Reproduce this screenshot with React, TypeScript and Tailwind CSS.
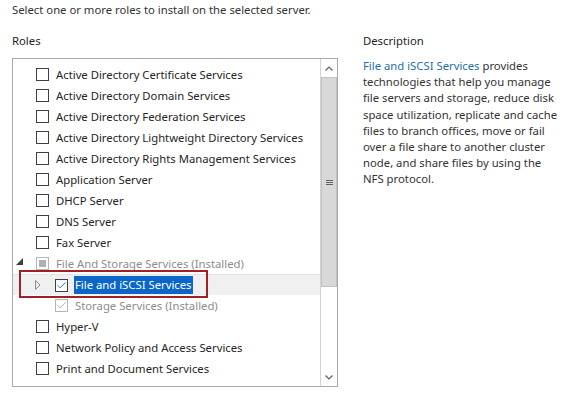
import { Check } from "lucide-react";

type Role = {
  label: string;
  level?: number;
  state?: "off" | "on" | "mixed";
  disabled?: boolean;
  arrow?: "open" | "closed";
  selected?: boolean;
};

const roles: Role[] = [
  { label: "Active Directory Certificate Services" },
  { label: "Active Directory Domain Services" },
  { label: "Active Directory Federation Services" },
  { label: "Active Directory Lightweight Directory Services" },
  { label: "Active Directory Rights Management Services" },
  { label: "Application Server" },
  { label: "DHCP Server" },
  { label: "DNS Server" },
  { label: "Fax Server" },
  { label: "File And Storage Services (Installed)", state: "mixed", disabled: true, arrow: "open" },
  { label: "File and iSCSI Services", level: 1, state: "on", arrow: "closed", selected: true },
  { label: "Storage Services (Installed)", level: 1, state: "on", disabled: true },
  { label: "Hyper-V" },
  { label: "Network Policy and Access Services" },
  { label: "Print and Document Services" },
];

const CheckBox = ({ state = "off", disabled }: { state?: Role["state"]; disabled?: boolean }) => (
  <div
    className={`flex h-[13px] w-[13px] shrink-0 items-center justify-center border bg-white ${
      disabled ? "border-[#b5b5b5]" : "border-[#404040]"
    }`}
  >
    {state === "mixed" && <div className="h-[7px] w-[7px] bg-[#b0b0b0]" />}
    {state === "on" && (
      <Check size={11} strokeWidth={2} className={disabled ? "text-[#a8a8a8]" : "text-[#2b5fa6]"} />
    )}
  </div>
);

const RoleRow = ({ role }: { role: Role }) => {
  const indent = role.level === 1;
  return (
    <div
      className={`relative flex h-[21px] items-center ${
        role.selected ? "border-t border-[#e2e2e2] bg-[#f0f0f0]" : ""
      }`}
    >
      {indent && <div className="w-[19px] shrink-0" />}
      <div className="relative h-full w-[23px] shrink-0">
        {role.arrow === "open" && (
          <svg className="absolute left-[3px] top-[5px]" width="7" height="7" viewBox="0 0 7 7">
            <path d="M7 0 L7 7 L0 7 Z" fill="#404040" />
          </svg>
        )}
        {role.arrow === "closed" && (
          <svg className="absolute left-[3px] top-[5px]" width="6" height="10" viewBox="0 0 6 10">
            <path d="M0.5 0.5 L5 5 L0.5 9.5 Z" fill="none" stroke="#8c8c8c" strokeWidth="1" />
          </svg>
        )}
      </div>
      <CheckBox state={role.state} disabled={role.disabled} />
      <span
        className={`ml-[6px] whitespace-nowrap px-[1px] leading-[18px] ${
          role.selected
            ? "bg-[#0a66c8] text-white"
            : role.disabled
              ? "text-[#8d8d8d]"
              : "text-[#262626]"
        }`}
      >
        {role.label}
      </span>
      {role.selected && (
        <div className="pointer-events-none absolute left-[6px] top-[-5px] h-[28px] w-[189px] border-2 border-[#a31f26]" />
      )}
    </div>
  );
};

export default function App() {
  return (
    <div
      className="h-[397px] w-[568px] overflow-hidden bg-white pl-[12px] text-[11.3px] text-[#333]"
      style={{ fontFamily: '"Noto Sans", "Open Sans", sans-serif' }}
    >
      <p className="pt-[2px] leading-[16px]">Select one or more roles to install on the selected server.</p>

      <div className="mt-[15px] flex">
        <div className="w-[326px] shrink-0">
          <h3 className="leading-[16px] text-[#1e1e1e]">Roles</h3>
          <div className="mt-[9px] flex h-[329px] border border-[#a9a9a9]">
            <div className="flex-1 pt-[5px]">
              {roles.map((r) => (
                <RoleRow key={r.label} role={r} />
              ))}
            </div>
            <div className="flex w-[17px] flex-col border-l border-[#d4d4d4] bg-white">
              <div className="flex h-[18px] items-center justify-center">
                <svg width="8" height="5" viewBox="0 0 8 5">
                  <path d="M0.5 4.5 L4 1 L7.5 4.5" fill="none" stroke="#606060" strokeWidth="1.2" />
                </svg>
              </div>
              <div className="flex h-[210px] items-center justify-center border border-[#c2c2c2] bg-[#d8d8d8]">
                <div className="flex w-[7px] flex-col gap-[1px]">
                  <div className="h-[1px] bg-[#606060]" />
                  <div className="h-[1px] bg-[#606060]" />
                  <div className="h-[1px] bg-[#606060]" />
                </div>
              </div>
              <div className="flex-1" />
              <div className="flex h-[17px] items-center justify-center">
                <svg width="8" height="5" viewBox="0 0 8 5">
                  <path d="M0.5 0.5 L4 4 L7.5 0.5" fill="none" stroke="#606060" strokeWidth="1.2" />
                </svg>
              </div>
            </div>
          </div>
        </div>

        <div className="ml-[25px] w-[196px]">
          <h3 className="leading-[16px] text-[#1e1e1e]">Description</h3>
          <p className="mt-[9px] leading-[16.2px]">
            <span className="text-[#1f6fa8]">File and iSCSI Services</span> provides technologies that help you
            manage file servers and storage, reduce disk space utilization, replicate and cache files to branch
            offices, move or fail over a file share to another cluster node, and share files by using the NFS
            protocol.
          </p>
        </div>
      </div>
    </div>
  );
}
